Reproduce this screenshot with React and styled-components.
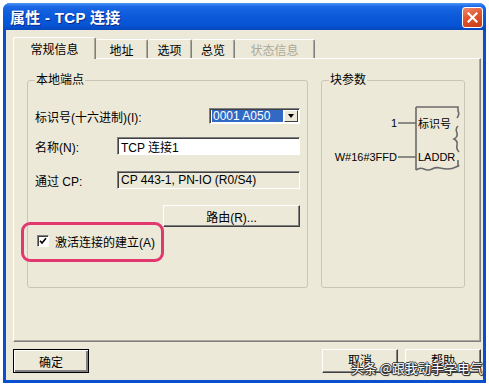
import React from "react";
import styled, { createGlobalStyle } from "styled-components";

const GlobalStyle = createGlobalStyle`
  html, body {
    margin: 0;
    padding: 0;
    background: #fff;
  }
  body {
    font-family: "Liberation Sans", "Noto Sans CJK SC", sans-serif;
    font-size: 12px;
    color: #000;
  }
`;

const Window = styled.div`
  position: relative;
  margin: 3px 0 0 3px;
  width: 483px;
  height: 380px;
  display: flex;
  flex-direction: column;
  background: #0a4fd0;
  border-radius: 7px 7px 0 0;
  overflow: hidden;
`;

const TitleBar = styled.div`
  height: 27px;
  flex-shrink: 0;
  display: flex;
  align-items: center;
  justify-content: space-between;
  padding: 0 3px 0 7px;
  background: linear-gradient(
    180deg,
    #4a95f6 0%,
    #1a66e4 14%,
    #0b5ad9 50%,
    #0754d6 82%,
    #0647bb 100%
  );
`;

const Title = styled.span`
  color: #fff;
  font-weight: bold;
  font-size: 15px;
  letter-spacing: 0.3px;
  text-shadow: 1px 1px 0 #0b2a8c;
`;

const CloseButton = styled.div`
  width: 21px;
  height: 21px;
  box-sizing: border-box;
  margin-top: 2px;
  border: 1px solid #fff;
  border-radius: 3px;
  background: linear-gradient(160deg, #f08a6a 0%, #e0542e 45%, #c53d16 100%);
  display: flex;
  align-items: center;
  justify-content: center;
`;

const Body = styled.div`
  flex: 1;
  margin: 0 3px 3px;
  background: #ece9d8;
  padding: 7px 2px 7px 7px;
  display: flex;
  flex-direction: column;
`;

const TabStrip = styled.div`
  display: flex;
  align-items: flex-end;
  height: 21px;
  position: relative;
  z-index: 2;
`;

const Tab = styled.div`
  width: ${(p) => p.$w}px;
  height: ${(p) => (p.$active ? 22 : 19)}px;
  margin-bottom: ${(p) => (p.$active ? -1 : 0)}px;
  box-sizing: border-box;
  display: flex;
  align-items: center;
  justify-content: center;
  padding-top: ${(p) => (p.$active ? 0 : 1)}px;
  background: #ece9d8;
  border-top: 1px solid #fff;
  border-left: ${(p) => (p.$first || p.$active ? "1px solid #fff" : "none")};
  border-right: 1px solid #808080;
  box-shadow: inset -1px 0 0 #aca899;
  border-radius: 2px 2px 0 0;
  color: ${(p) => (p.$disabled ? "#aca899" : "#000")};
  font-size: 12px;
`;

const Panel = styled.div`
  height: 284px;
  box-sizing: border-box;
  border: 1px solid;
  border-color: #fff #808080 #808080 #fff;
  box-shadow: inset -1px -1px 0 #aca899;
  padding: 14px 15px 0 13px;
  display: flex;
  gap: 13px;
`;

const Group = styled.fieldset`
  margin: 0;
  padding: 0 7px;
  width: ${(p) => p.$w}px;
  height: 215px;
  box-sizing: border-box;
  min-width: 0;
  border: 1px solid #c9c6b5;
  border-radius: 3px;
  display: flex;
  flex-direction: column;
`;

const Legend = styled.legend`
  padding: 0 1px;
  margin-left: 0;
  font-size: 12px;
  line-height: 14px;
`;

const Row = styled.div`
  display: flex;
  align-items: center;
  height: ${(p) => p.$h}px;
  margin-top: ${(p) => p.$mt}px;
  position: relative;
`;

const Label = styled.span`
  width: 82px;
  flex-shrink: 0;
  white-space: nowrap;
`;

const Combo = styled.div`
  margin-left: auto;
  width: 91px;
  height: 16px;
  box-sizing: border-box;
  display: flex;
  border: 1px solid;
  border-color: #808080 #fff #fff #808080;
  box-shadow: inset 1px 1px 0 #404040;
  background: #fff;
  padding: 1px 1px 1px 2px;
`;

const ComboValue = styled.span`
  flex: 1;
  background: #316ac5;
  color: #fff;
  font-size: 12px;
  line-height: 12px;
  padding-left: 1px;
  white-space: nowrap;
`;

const ComboArrow = styled.span`
  width: 14px;
  margin-left: 1px;
  box-sizing: border-box;
  background: #ece9d8;
  border: 1px solid;
  border-color: #fff #404040 #404040 #fff;
  display: flex;
  align-items: center;
  justify-content: center;

  &::after {
    content: "";
    border-left: 3px solid transparent;
    border-right: 3px solid transparent;
    border-top: 4px solid #000;
  }
`;

const Field = styled.div`
  flex: 1;
  height: 18px;
  box-sizing: border-box;
  border: 1px solid;
  border-color: #808080 #fff #fff #808080;
  box-shadow: inset 1px 1px 0 #404040;
  background: ${(p) => (p.$readonly ? "#ece9d8" : "#fff")};
  padding: 0 3px;
  display: flex;
  align-items: center;
  white-space: nowrap;
`;

const Button = styled.div`
  width: ${(p) => p.$w}px;
  height: ${(p) => p.$h}px;
  box-sizing: border-box;
  background: #ece9d8;
  border: 1px solid;
  border-color: ${(p) => (p.$default ? "#000" : "#fff #404040 #404040 #fff")};
  box-shadow: ${(p) =>
    p.$default
      ? "inset 1px 1px 0 #fff, inset -2px -2px 0 #808080"
      : "inset -1px -1px 0 #808080"};
  display: flex;
  align-items: center;
  justify-content: center;
  padding-bottom: ${(p) => (p.$footer ? 3 : 0)}px;
  font-size: 12px;
  margin-left: ${(p) => (p.$push ? "auto" : "0")};
  margin-top: ${(p) => p.$mt || 0}px;
  align-self: ${(p) => (p.$end ? "flex-end" : "auto")};
`;

const CheckBox = styled.span`
  width: 12px;
  height: 12px;
  box-sizing: border-box;
  margin-left: 2px;
  border: 1px solid;
  border-color: #808080 #fff #fff #808080;
  box-shadow: inset 1px 1px 0 #404040;
  background: #fff;
  display: flex;
  align-items: center;
  justify-content: center;
`;

const CheckText = styled.span`
  margin-left: 6px;
  white-space: nowrap;
`;

const Highlight = styled.span`
  position: absolute;
  left: -14px;
  top: -13px;
  width: 143px;
  height: 40px;
  box-sizing: border-box;
  border: 3px solid #e2386f;
  border-radius: 9px;
  pointer-events: none;
`;

const Diagram = styled.svg`
  margin-top: 13px;
  overflow: visible;

  text {
    font-family: "Liberation Sans", "Noto Sans CJK SC", sans-serif;
    font-size: 11px;
    fill: #000;
  }
`;

const Footer = styled.div`
  display: flex;
  gap: 7px;
  margin-top: 7px;
`;

const Watermark = styled.span`
  position: absolute;
  right: 3px;
  bottom: 6px;
  color: #fff;
  font-size: 13px;
  font-family: "Noto Sans CJK SC", sans-serif;
  text-shadow: 1px 0 0 #333, -1px 0 0 #333, 0 1px 0 #333, 0 -1px 0 #333,
    1px 1px 1px #222;
  white-space: nowrap;
`;

const tabs = [
  { label: "常规信息", w: 83, active: true },
  { label: "地址", w: 52 },
  { label: "选项", w: 44 },
  { label: "总览", w: 43 },
  { label: "状态信息", w: 80, disabled: true },
];

const App = () => {
  return (
    <>
      <GlobalStyle />
      <Window>
        <TitleBar>
          <Title>属性 - TCP 连接</Title>
          <CloseButton>
            <svg width="11" height="11" viewBox="0 0 11 11">
              <path d="M1.5 1.5 L9.5 9.5 M9.5 1.5 L1.5 9.5" stroke="#fff" strokeWidth="2.2" strokeLinecap="square" />
            </svg>
          </CloseButton>
        </TitleBar>
        <Body>
          <TabStrip>
            {tabs.map((t, i) => (
              <Tab key={t.label} $w={t.w} $active={t.active} $disabled={t.disabled} $first={i === 0}>
                {t.label}
              </Tab>
            ))}
          </TabStrip>
          <Panel>
            <Group $w={281}>
              <Legend>本地端点</Legend>
              <Row $h={16} $mt={21}>
                <Label>标识号(十六进制)(I):</Label>
                <Combo>
                  <ComboValue>0001 A050</ComboValue>
                  <ComboArrow />
                </Combo>
              </Row>
              <Row $h={18} $mt={13}>
                <Label>名称(N):</Label>
                <Field>TCP 连接1</Field>
              </Row>
              <Row $h={18} $mt={16}>
                <Label>通过 CP:</Label>
                <Field $readonly>CP 443-1, PN-IO (R0/S4)</Field>
              </Row>
              <Button $w={137} $h={22} $mt={16} $end>
                路由(R)...
              </Button>
              <Row $h={12} $mt={8}>
                <Highlight />
                <CheckBox>
                  <svg width="8" height="8" viewBox="0 0 8 8">
                    <path d="M1 3.8 L3 6 L7 1.2" stroke="#000" strokeWidth="1.6" fill="none" />
                  </svg>
                </CheckBox>
                <CheckText>激活连接的建立(A)</CheckText>
              </Row>
            </Group>
            <Group $w={144}>
              <Legend>块参数</Legend>
              <Diagram width="130" height="76" viewBox="0 0 130 76">
                <g stroke="#6a6a6a" strokeWidth="1.6" fill="none">
                  <path d="M87 7 V70" />
                  <path d="M87 7 H129 V11 q2 3 -1 7" />
                  <path d="M129 26 q-3 3 -1 7 q1 4 -3 6 q4 2 3 6 q-1 4 2 7" />
                  <path d="M129 60 V67" />
                  <path d="M87 70 q4 -3 8 -1 t8 0 t8 -1 t8 1 t8 -2 t2 -1" />
                  <path d="M69 23 H87" />
                  <path d="M69 57 H87" />
                </g>
                <text x="68" y="27" textAnchor="end">1</text>
                <text x="89" y="28">标识号</text>
                <text x="68" y="61" textAnchor="end">W#16#3FFD</text>
                <text x="89" y="61">LADDR</text>
              </Diagram>
            </Group>
          </Panel>
          <Footer>
            <Button $w={76} $h={24} $default>
              确定
            </Button>
            <Button $w={76} $h={24} $push $footer>
              取消
            </Button>
            <Button $w={76} $h={24} $footer>
              帮助
            </Button>
          </Footer>
        </Body>
        <Watermark>头条 @跟我动手学电气</Watermark>
      </Window>
    </>
  );
};

export default App;
